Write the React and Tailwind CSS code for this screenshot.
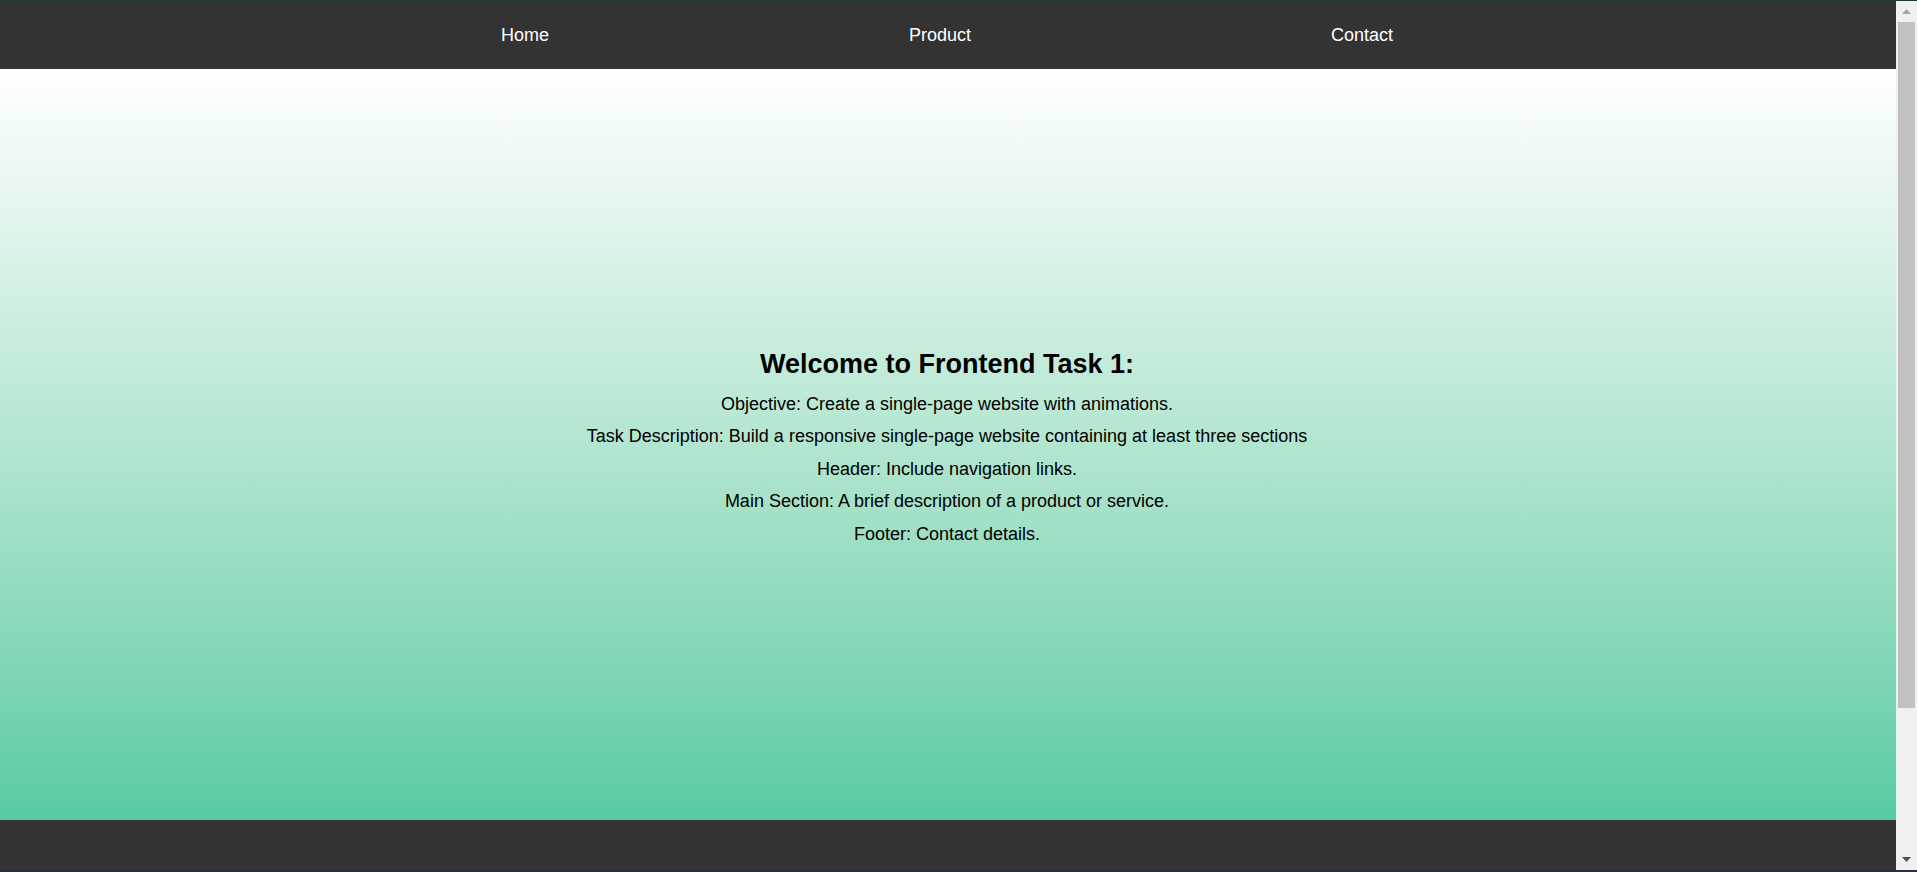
import React from "react";

const links = ["Home", "Product", "Contact"];

const lines = [
  "Objective: Create a single-page website with animations.",
  "Task Description: Build a responsive single-page website containing at least three sections",
  "Header: Include navigation links.",
  "Main Section: A brief description of a product or service.",
  "Footer: Contact details.",
];

// fake window scrollbar, it is part of the screenshot
const Scrollbar = () => (
  <div className="w-[21px] bg-[#f0f0f0] flex flex-col items-center">
    <div className="h-[21px] w-full flex items-center justify-center">
      <svg width="9" height="5" viewBox="0 0 9 5"><polygon points="4.5,0 9,5 0,5" fill="#a3a3a3" /></svg>
    </div>
    <div className="w-[17px] h-[686px] bg-[#c1c1c1]" />
    <div className="flex-1" />
    <div className="h-[21px] w-full flex items-center justify-center">
      <svg width="9" height="5" viewBox="0 0 9 5"><polygon points="0,0 9,0 4.5,5" fill="#505050" /></svg>
    </div>
  </div>
);

export default function App() {
  return (
    <div className="h-[872px] w-full flex flex-col font-['Liberation_Sans',Arial,sans-serif] overflow-hidden">
      <div className="h-px bg-[#1f3a36]" />
      <div className="flex-1 flex min-h-0">
        <div className="flex-1 flex flex-col">
          <header className="h-[68px] bg-[#333333] flex items-center justify-center gap-[360px] pr-[2px]">
            {links.map((l) => (
              <a key={l} href="#" className="text-white text-[18px] leading-none">
                {l}
              </a>
            ))}
          </header>

          <main className="flex-1 bg-gradient-to-b from-[#ffffff] to-[#57cba2] flex flex-col items-center justify-center text-black pt-[10px] pr-[2px]">
            <h2 className="text-[27px] font-bold leading-[31px] mb-[8px]">Welcome to Frontend Task 1:</h2>
            {lines.map((t) => (
              <p key={t} className="text-[18px] leading-[32.6px]">
                {t}
              </p>
            ))}
          </main>

          <footer className="h-[50px] bg-[#333333]" />
        </div>
        <Scrollbar />
      </div>
      <div className="h-[2px] bg-[#2b2f3b]" />
    </div>
  );
}
